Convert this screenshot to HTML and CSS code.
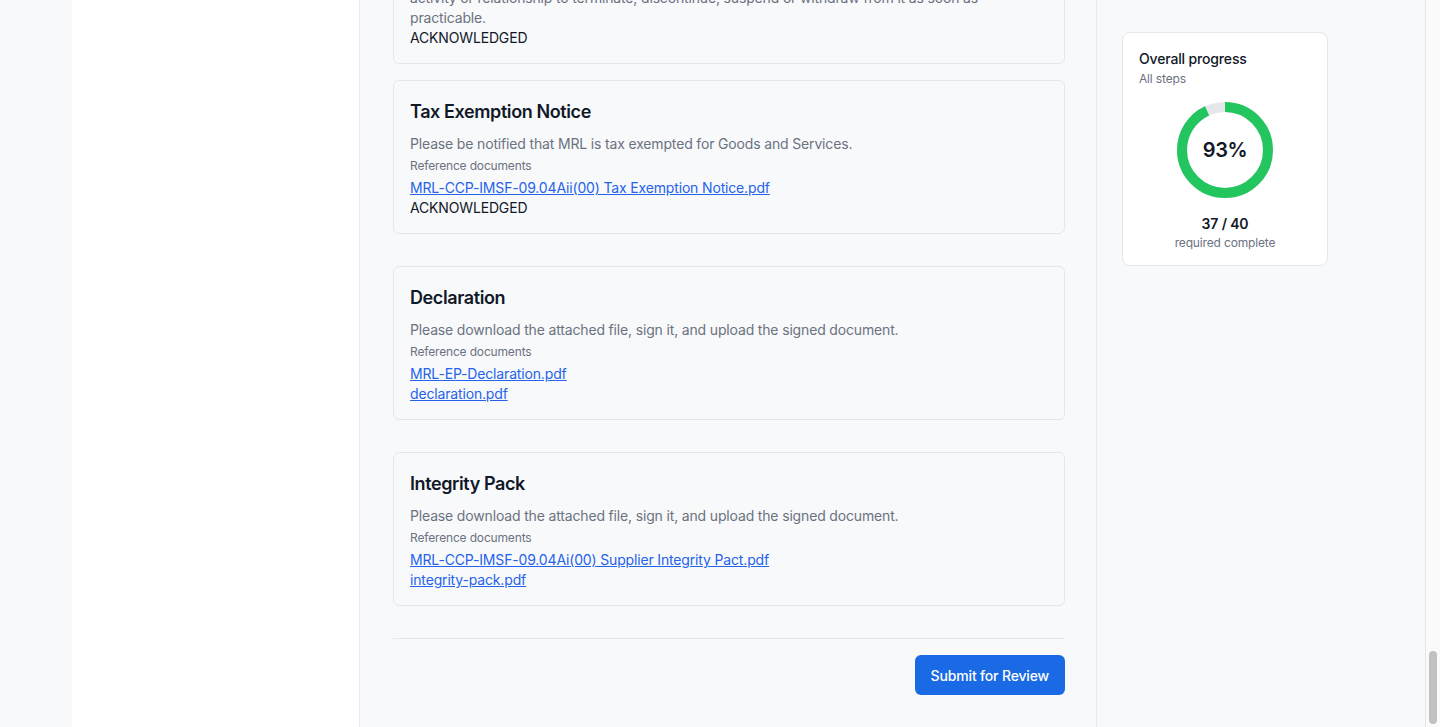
FILE: index.html
```html
<!DOCTYPE html>
<html lang="en">
<head>
  <meta charset="UTF-8">
  <title>Supplier onboarding</title>
  <link rel="stylesheet" href="styles.css">
</head>
<body>

<div class="shell">
  <div class="rail"></div>
  <aside class="sidebar"></aside>

  <main class="main">
    <div class="step">
      <h3>Conflict of Interest</h3>
      <p class="desc">Suppliers must disclose any actual or potential conflict of interest with MRL personnel and, upon becoming aware of it, cause the<br>activity or relationship to terminate, discontinue, suspend or withdraw from it as soon as practicable.</p>
      <p class="status">ACKNOWLEDGED</p>
    </div>

    <div class="step">
      <h3>Tax Exemption Notice</h3>
      <p class="desc">Please be notified that MRL is tax exempted for Goods and Services.</p>
      <p class="ref-label">Reference documents</p>
      <a href="#">MRL-CCP-IMSF-09.04Aii(00) Tax Exemption Notice.pdf</a>
      <p class="status">ACKNOWLEDGED</p>
    </div>

    <div class="step spaced">
      <h3>Declaration</h3>
      <p class="desc">Please download the attached file, sign it, and upload the signed document.</p>
      <p class="ref-label">Reference documents</p>
      <a href="#">MRL-EP-Declaration.pdf</a>
      <a href="#">declaration.pdf</a>
    </div>

    <div class="step spaced">
      <h3>Integrity Pack</h3>
      <p class="desc">Please download the attached file, sign it, and upload the signed document.</p>
      <p class="ref-label">Reference documents</p>
      <a href="#">MRL-CCP-IMSF-09.04Ai(00) Supplier Integrity Pact.pdf</a>
      <a href="#">integrity-pack.pdf</a>
    </div>

    <div class="actions">
      <button>Submit for Review</button>
    </div>
  </main>

  <aside class="summary">
    <div class="progress-card">
      <div class="progress-title">Overall progress</div>
      <div class="progress-sub steps-label">All steps</div>
      <div class="ring">
        <svg width="96" height="96" viewBox="0 0 96 96">
          <circle cx="48" cy="48" r="43" fill="none" stroke="#e5e7eb" stroke-width="10"/>
          <circle cx="48" cy="48" r="43" fill="none" stroke="#22c55e" stroke-width="10"
                  stroke-dasharray="251.3 270.2" transform="rotate(-90 48 48)"/>
        </svg>
        <span class="ring-value">93%</span>
      </div>
      <div class="progress-count">37 / 40</div>
      <div class="progress-sub count-label">required complete</div>
    </div>
  </aside>

  <div class="scrollbar"><div class="thumb"></div></div>
</div>

</body>
</html>
```

FILE: styles.css
```css
body {
  margin: 0;
  font-family: Inter, "Noto Sans", Arial, sans-serif;
  letter-spacing: -0.16px;
  color: #111827;
  background: #f8f9fb;
}
.shell {
  display: flex;
  height: 100vh;
  overflow: hidden;
}
.rail {
  width: 72px;
  flex-shrink: 0;
  background: #f8f9fb;
}
.sidebar {
  width: 287px;
  flex-shrink: 0;
  background: #fff;
  border-right: 1px solid #e6e9ef;
}
.main {
  width: 672px;
  flex-shrink: 0;
  padding: 0 31px 32px 33px;
  display: flex;
  flex-direction: column;
  justify-content: flex-end;
  overflow: hidden;
  border-right: 1px solid #e6e9ef;
}
.step {
  flex-shrink: 0;
  display: flex;
  flex-direction: column;
  align-items: flex-start;
  background: #f8f9fb;
  border: 1px solid #e4e7ec;
  border-radius: 6px;
  padding: 17px 16px 15px;
  margin-bottom: 16px;
}
.step.spaced {
  margin-top: 16px;
}
.step h3 {
  margin: 0;
  font-size: 18px;
  line-height: 28px;
  font-weight: 600;
  letter-spacing: -0.4px;
}
.desc {
  margin: 8px 0 0;
  font-size: 14px;
  line-height: 20px;
  color: #6b7280;
}
.ref-label {
  margin: 4px 0 4px;
  font-size: 12px;
  line-height: 16px;
  color: #6b7280;
}
.step a {
  font-size: 14px;
  line-height: 20px;
  color: #2563eb;
  text-decoration: underline;
}
.status {
  margin: 0;
  font-size: 14px;
  line-height: 20px;
  color: #111827;
}
.actions {
  flex-shrink: 0;
  margin-top: 16px;
  border-top: 1px solid #e4e7ec;
  padding-top: 16px;
  display: flex;
  justify-content: flex-end;
}
.actions button {
  height: 40px;
  padding: 0 16px;
  background: #1a6ae5;
  color: #fff;
  border: none;
  border-radius: 6px;
  font-family: inherit;
  font-size: 14px;
  font-weight: 500;
  letter-spacing: -0.16px;
  cursor: pointer;
}
.summary {
  width: 328px;
  flex-shrink: 0;
  box-sizing: border-box;
  padding: 32px 24px 0 25px;
  background: #f8f9fb;
}
.progress-card {
  width: 206px;
  box-sizing: border-box;
  background: #fff;
  border: 1px solid #e4e7ec;
  border-radius: 8px;
  padding: 16px 16px 14px;
  text-align: center;
}
.progress-title {
  text-align: left;
  font-size: 14px;
  line-height: 20px;
  font-weight: 500;
}
.progress-sub {
  margin-top: 1px;
  font-size: 12px;
  line-height: 16px;
  color: #6b7280;
}
.steps-label {
  margin-top: 2px;
  text-align: left;
}
.ring {
  position: relative;
  width: 96px;
  height: 96px;
  margin: 15px auto 16px;
}
.ring svg {
  display: block;
}
.ring-value {
  position: absolute;
  inset: 0;
  display: flex;
  align-items: center;
  justify-content: center;
  font-size: 20px;
  font-weight: 600;
  letter-spacing: -0.4px;
}
.progress-count {
  font-size: 14px;
  line-height: 20px;
  font-weight: 600;
}
.scrollbar {
  flex: 1;
  background: #fafafa;
  border-left: 1px solid #e5e5e5;
  display: flex;
  flex-direction: column;
  justify-content: flex-end;
  align-items: center;
  padding-bottom: 3px;
}
.thumb {
  width: 8px;
  height: 73px;
  border-radius: 4px;
  background: #c1c1c1;
}
```
